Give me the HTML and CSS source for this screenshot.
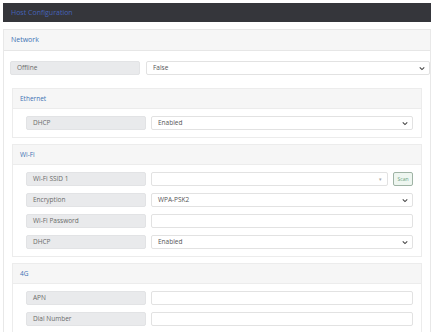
FILE: index.html
```html
<!DOCTYPE html>
<html lang="en">
<head>
  <meta charset="UTF-8" />
  <meta name="viewport" content="width=device-width, initial-scale=1.0" />
  <title>Host Configuration</title>
  <link rel="stylesheet" href="styles.css">
</head>
<body>
  <div class="page">
    <header class="topbar">Host Configuration</header>

    <section class="panel">
      <div class="panel-head">Network</div>
      <div class="panel-body">
        <div class="field top">
          <span class="label">Offline</span>
          <div class="control select">False</div>
        </div>

        <div class="card">
          <div class="card-head">Ethernet</div>
          <div class="card-body">
            <div class="field">
              <span class="label">DHCP</span>
              <div class="control select">Enabled</div>
            </div>
          </div>
        </div>

        <div class="card">
          <div class="card-head">Wi-Fi</div>
          <div class="card-body">
            <div class="field">
              <span class="label">Wi-Fi SSID 1</span>
              <div class="control combo"><span class="caret">&#9662;</span></div>
              <button class="scan">Scan</button>
            </div>
            <div class="field">
              <span class="label">Encryption</span>
              <div class="control select">WPA-PSK2</div>
            </div>
            <div class="field">
              <span class="label">Wi-Fi Password</span>
              <div class="control"></div>
            </div>
            <div class="field">
              <span class="label">DHCP</span>
              <div class="control select">Enabled</div>
            </div>
          </div>
        </div>

        <div class="card">
          <div class="card-head">4G</div>
          <div class="card-body">
            <div class="field">
              <span class="label">APN</span>
              <div class="control"></div>
            </div>
            <div class="field">
              <span class="label">Dial Number</span>
              <div class="control"></div>
            </div>
          </div>
        </div>
      </div>
    </section>
  </div>
</body>
</html>
```

FILE: styles.css
```css
* { box-sizing: border-box; }
html, body { margin: 0; padding: 0; }
body {
  font-family: "Open Sans", Arial, sans-serif;
  font-size: 6.5px;
  color: #6a6a6a;
  background: #fff;
  overflow: hidden;
}
.page {
  margin: 3px 5px 0 3px;
}
.topbar {
  background: #35363b;
  color: #4563b8;
  height: 19px;
  line-height: 19px;
  padding: 0 8px;
  font-size: 7px;
}
.panel {
  margin-top: 7px;
  border: 1px solid #e8e8e8;
  border-bottom: none;
}
.panel-head {
  background: #f6f6f6;
  border-bottom: 1px solid #e6e6e6;
  color: #3d72b4;
  height: 21px;
  line-height: 20px;
  padding: 0 7px;
  font-size: 7px;
}
.panel-body {
  padding: 10px 0 0 6px;
}
.field {
  display: flex;
  gap: 5px;
  height: 14px;
  margin-bottom: 7px;
}
.field.top {
  gap: 6px;
  margin-bottom: 13px;
}
.field.top .label { width: 130px; }
.label {
  width: 120px;
  flex: none;
  background: #e9eaec;
  border: 1px solid #e2e3e5;
  border-radius: 2px;
  line-height: 12px;
  padding: 0 6px;
}
.control {
  flex: 1;
  background: #fff;
  border: 1px solid #e2e2e2;
  border-radius: 2px;
  line-height: 12px;
  padding: 0 6px;
  color: #555;
  position: relative;
}
.select {
  background-image: url("data:image/svg+xml,%3Csvg xmlns='http://www.w3.org/2000/svg' width='8' height='6' viewBox='0 0 8 6'%3E%3Cpath d='M1 1.5l3 3 3-3' fill='none' stroke='%23444' stroke-width='1.4'/%3E%3C/svg%3E");
  background-repeat: no-repeat;
  background-position: right 4px center;
  background-size: 6px 5px;
}
.combo .caret {
  position: absolute;
  right: 5px;
  top: 0;
  color: #aaa;
  font-size: 5px;
}
.scan {
  flex: none;
  width: 20px;
  height: 14px;
  padding: 0;
  font-family: inherit;
  font-size: 5px;
  color: #6aa07c;
  background: #eef6f0;
  border: 1px solid #9fb3a5;
  border-radius: 2px;
}
.card {
  border: 1px solid #ececec;
  margin: 0 8px 6px 2px;
}
.card-head {
  background: #f6f6f6;
  border-bottom: 1px solid #ececec;
  color: #3d72b4;
  height: 20px;
  line-height: 20px;
  padding: 0 7px;
  font-size: 6.5px;
}
.card-body {
  padding: 7px 8px 0 13px;
}
```
